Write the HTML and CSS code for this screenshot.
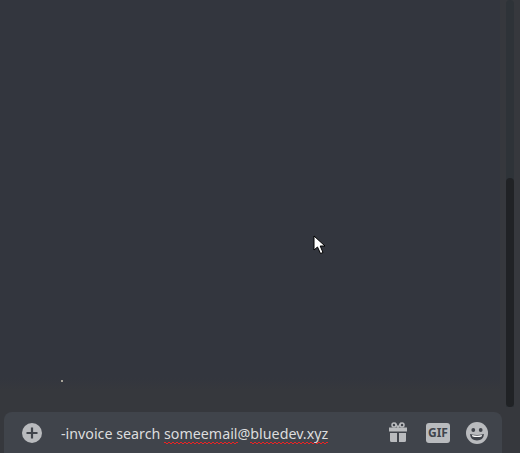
FILE: index.html
```html
<!DOCTYPE html>

<html>
<head>
    <meta charset="utf-8">
    <title>Chat</title>
    <link rel="stylesheet" href="styles.css">
</head>
<body>

    <div class="chat">
        <div class="messages">
            <div class="message-list">
                <span class="speck"></span>
            </div>
            <div class="scrollbar">
                <div class="scroll-thumb"></div>
            </div>
            <!-- mouse pointer caught in the screenshot -->
            <svg class="pointer" width="14" height="20" viewBox="0 0 14 20">
                <path d="M1 1 L1 15 L4.5 12 L7.5 18.5 L10 17.5 L7.2 11 L12 11 Z" fill="#fff" stroke="#000" stroke-width="1"/>
            </svg>
        </div>

        <div class="composer">
            <button type="button" class="attach">
                <svg width="20" height="20" viewBox="0 0 20 20">
                    <circle cx="10" cy="10" r="10" fill="#b9bbbe"/>
                    <path d="M10 4.5 V15.5 M4.5 10 H15.5" stroke="#40444b" stroke-width="2.2"/>
                </svg>
            </button>
            <div class="input-text">-invoice search <span class="misspelled">someemail</span>@<span class="misspelled">bluedev.xyz</span></div>
            <div class="composer-icons">
                <svg class="gift" width="20" height="20" viewBox="0 0 20 20">
                    <path d="M1 5.5 H19 V9.5 H1 Z M2 11 H9 V20 H3.5 Q2 20 2 18.5 Z M11 11 H18 V18.5 Q18 20 16.5 20 H11 Z" fill="#b9bbbe"/>
                    <path d="M10 5.5 L7 1 M10 5.5 L13 1" stroke="#b9bbbe" stroke-width="1.5"/>
                    <circle cx="6" cy="3" r="2" fill="none" stroke="#b9bbbe" stroke-width="1.5"/>
                    <circle cx="14" cy="3" r="2" fill="none" stroke="#b9bbbe" stroke-width="1.5"/>
                </svg>
                <div class="gif">GIF</div>
                <svg width="22" height="22" viewBox="0 0 22 22">
                    <circle cx="11" cy="11" r="11" fill="#b9bbbe"/>
                    <circle cx="7.3" cy="8" r="1.9" fill="#40444b"/>
                    <circle cx="14.7" cy="8" r="1.9" fill="#40444b"/>
                    <path d="M4 12 Q11 14 18 12 Q17.5 18.5 11 18.5 Q4.5 18.5 4 12 Z" fill="#40444b"/>
                    <path d="M6 13 Q11 14.4 16 13 L15.6 14.6 Q11 15.6 6.4 14.6 Z" fill="#fff"/>
                </svg>
            </div>
        </div>
    </div>

</body>
</html>
```

FILE: styles.css
```css
body {
    margin: 0;
    height: 100vh;
    overflow: hidden;
    background: #36383d;
    font-family: "Noto Sans", "Open Sans", sans-serif;
}

.chat {
    height: 100%;
    display: flex;
    flex-direction: column;
}

/* message area */
.messages {
    flex: 1;
    position: relative;
    display: flex;
    justify-content: space-between;
    min-height: 0;
}

.message-list {
    flex: 1;
    background: linear-gradient(#33363e, #33363e 378px, #36383d 390px);
}

.speck {
    position: absolute;
    left: 61px;
    top: 380px;
    width: 2px;
    height: 2px;
    background: #a8a498;
}

.scrollbar {
    width: 8px;
    margin: 0 6px 5px 6px;
    background: #2e3338;
    border-radius: 4px 4px 0 0;
}

.scroll-thumb {
    width: 8px;
    height: 229px;
    margin-top: 178px;
    background: #202225;
    border-radius: 4px;
}

.pointer {
    position: absolute;
    left: 313px;
    top: 235px;
}

/* message box */
.composer {
    height: 41px;
    margin: 0 18px 0 4px;
    padding-left: 18px;
    padding-right: 14px;
    display: flex;
    align-items: center;
    background: #40444b;
    border-radius: 8px 8px 0 0;
}

.attach {
    padding: 0;
    border: none;
    background: none;
    display: flex;
}

.input-text {
    flex: 1;
    margin-left: 19px;
    padding-top: 2px;
    font-size: 14.25px;
    color: #dcddde;
    white-space: nowrap;
}

/* small squiggle, the wavy text-decoration comes out too big */
.misspelled {
    padding-bottom: 1px;
    background:
        linear-gradient(45deg, transparent 35%, #ee2222 35%, #ee2222 65%, transparent 65%) 0 100% / 4px 2px repeat-x,
        linear-gradient(-45deg, transparent 35%, #ee2222 35%, #ee2222 65%, transparent 65%) 2px 100% / 4px 2px repeat-x;
}

.composer-icons {
    display: flex;
    align-items: center;
    gap: 16px;
}

.gift {
    margin-bottom: 1px;
    margin-right: 2px;
}

.gif {
    width: 24px;
    height: 20px;
    line-height: 20px;
    border-radius: 3px;
    background: #b9bbbe;
    color: #40444b;
    font-size: 12px;
    font-weight: 700;
    text-align: center;
}
```
